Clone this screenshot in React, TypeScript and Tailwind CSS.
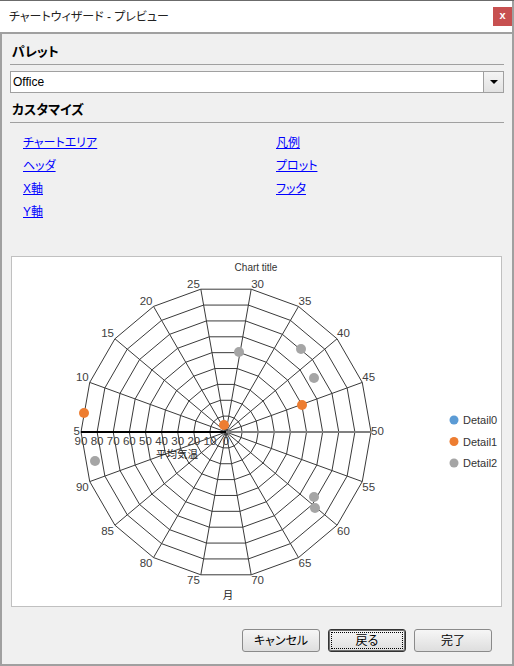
import React from 'react';

const CX = 226;
const CY = 432;
const R = 145;
const OX = 12;
const OY = 257;

const jp = { fontFamily: '"Liberation Sans", "Noto Sans CJK JP", sans-serif' };

function pt(r: number, deg: number): [number, number] {
  const a = (deg * Math.PI) / 180;
  return [CX + r * Math.cos(a), CY - r * Math.sin(a)];
}

const angles = Array.from({ length: 18 }, (_, i) => 180 - 20 * i);

const orange = [
  [84, 413],
  [224, 425],
  [302, 405],
];
const gray = [
  [239, 352],
  [301, 349],
  [314, 378],
  [95, 461],
  [314, 497],
  [315, 508],
];

function PolarChart() {
  const rings = Array.from({ length: 9 }, (_, k) => (R * (k + 1)) / 9);

  return (
    <svg width={490} height={349} className="block">
      <g transform={`translate(${-OX} ${-OY})`} fontFamily='"Liberation Sans", "Noto Sans CJK JP", sans-serif'>
        <text x={256} y={271} fontSize={10} fill="#333" textAnchor="middle">
          Chart title
        </text>

        {/* rings */}
        {rings.map((r, k) => (
          <polygon
            key={k}
            points={angles.map((d) => pt(r, d).join(',')).join(' ')}
            fill="none"
            stroke="#3a3a3a"
            strokeWidth={1}
          />
        ))}

        {/* spokes */}
        {angles.map((d, i) => {
          if (i === 0 || i === 9) return null;
          const [x, y] = pt(R, d);
          return <line key={i} x1={CX} y1={CY} x2={x} y2={y} stroke="#3a3a3a" strokeWidth={1} />;
        })}
        <line x1={CX} y1={CY} x2={CX + R} y2={CY} stroke="#808080" strokeWidth={2} />
        <line x1={CX} y1={CY} x2={CX - R} y2={CY} stroke="#000" strokeWidth={2} />

        {/* angle labels */}
        {angles.map((d, i) => {
          const [vx, vy] = pt(R, d);
          const c = Math.cos((d * Math.PI) / 180);
          const s = Math.sin((d * Math.PI) / 180);
          const anchor = c < -0.01 ? 'end' : c > 0.01 ? 'start' : 'middle';
          const x = c < -0.01 ? vx - 1 : vx;
          const y = s > 0.01 ? vy - 1.5 : s < -0.01 ? vy + 9.5 : vy + 3;
          return (
            <text key={i} x={x} y={y} fontSize={11.5} fill="#404040" textAnchor={anchor}>
              {5 * (i + 1)}
            </text>
          );
        })}

        {/* radial labels */}
        {Array.from({ length: 10 }, (_, j) => (
          <text key={j} x={CX - (R * j) / 9} y={445} fontSize={11.5} fill="#404040" textAnchor="middle">
            {10 * j}
          </text>
        ))}

        <text x={177} y={458} fontSize={10.5} fill="#222" textAnchor="middle">
          平均気温
        </text>
        <text x={228} y={599} fontSize={10.5} fill="#222" textAnchor="middle">
          月
        </text>

        {orange.map(([x, y], i) => (
          <circle key={'o' + i} cx={x} cy={y} r={5} fill="#ED7D31" />
        ))}
        {gray.map(([x, y], i) => (
          <circle key={'g' + i} cx={x} cy={y} r={5} fill="#A5A5A5" />
        ))}

        {/* legend */}
        {[
          ['Detail0', '#5B9BD5'],
          ['Detail1', '#ED7D31'],
          ['Detail2', '#A5A5A5'],
        ].map(([label, color], i) => (
          <g key={label}>
            <circle cx={454} cy={420 + i * 21.5} r={4.5} fill={color} />
            <text x={463} y={424 + i * 21.5} fontSize={11} fill="#333">
              {label}
            </text>
          </g>
        ))}
      </g>
    </svg>
  );
}

function DialogButton({ label, focused }: { label: string; focused?: boolean }) {
  return (
    <button
      className={`w-[78px] h-[23px] rounded-[3px] bg-gradient-to-b from-[#f6f6f6] to-[#dedede] text-[12px] text-black flex items-center justify-center p-[2px] ${
        focused ? 'border border-[#333] shadow-[inset_0_0_0_1px_#707070]' : 'border border-[#8a8a8a]'
      }`}
      style={jp}
    >
      <span
        className={`w-full h-full flex items-center justify-center ${
          focused ? 'border border-dotted border-black' : 'border border-transparent'
        }`}
      >
        {label}
      </span>
    </button>
  );
}

export default function App() {
  const links1 = ['チャートエリア', 'ヘッダ', 'X軸', 'Y軸'];
  const links2 = ['凡例', 'プロット', 'フッタ'];

  return (
    <div className="w-[514px] h-[666px] flex flex-col bg-[#f0f0f0] border-t border-[#6b6b6b] [font-feature-settings:'palt']" style={jp}>
      {/* タイトルバー */}
      <div className="h-[33px] shrink-0 bg-white border-b-2 border-r-2 border-[#a0a0a0] flex items-center justify-between pl-[9px]">
        <span className="text-[12px] text-[#222]">チャートウィザード - プレビュー</span>
        <div className="w-[19px] h-[19px] bg-[#c75050] flex items-center justify-center text-white text-[11px] font-bold leading-none pb-[2px]">
          x
        </div>
      </div>

      <div className="flex-1 flex flex-col border-x-2 border-b-2 border-[#a0a0a0] px-[8px]">
        {/* パレット */}
        <div className="mt-[10px] h-[16px] leading-[16px] text-[13px] font-bold text-black pl-[2px]">パレット</div>
        <div className="mt-[4px] h-px bg-[#a0a0a0]" />
        <div className="mt-[6px] h-[22px] flex border border-[#a0a0a0] bg-white">
          <div className="flex-1 flex items-center pl-[2px] text-[12px] text-black" style={{ fontFamily: '"Liberation Sans", sans-serif' }}>
            Office
          </div>
          <div className="w-[20px] border-l border-[#a0a0a0] bg-gradient-to-b from-[#f4f4f4] to-[#e2e2e2] flex items-center justify-center">
            <div className="w-0 h-0 border-l-[4px] border-r-[4px] border-t-[4px] border-l-transparent border-r-transparent border-t-black" />
          </div>
        </div>

        {/* カスタマイズ */}
        <div className="mt-[9px] h-[16px] leading-[16px] text-[13px] font-bold text-black pl-[2px]">カスタマイズ</div>
        <div className="mt-[4px] h-px bg-[#a0a0a0]" />

        <div className="mt-[9px] grid grid-cols-[253px_1fr] pl-[13px] text-[12px]">
          <div className="flex flex-col">
            {links1.map((l) => (
              <a key={l} className="h-[23px] leading-[23px] text-[#0000ff] underline self-start cursor-pointer">
                {l}
              </a>
            ))}
          </div>
          <div className="flex flex-col">
            {links2.map((l) => (
              <a key={l} className="h-[23px] leading-[23px] text-[#0000ff] underline self-start cursor-pointer">
                {l}
              </a>
            ))}
          </div>
        </div>

        {/* プレビュー */}
        <div className="mt-[32px] ml-[1px] mr-[2px] h-[351px] border border-[#c0c0c0] bg-white">
          <PolarChart />
        </div>

        {/* ボタン */}
        <div className="mt-[22px] flex justify-end gap-[8px] pr-[12px]">
          <DialogButton label="キャンセル" />
          <DialogButton label="戻る" focused />
          <DialogButton label="完了" />
        </div>
      </div>
    </div>
  );
}
